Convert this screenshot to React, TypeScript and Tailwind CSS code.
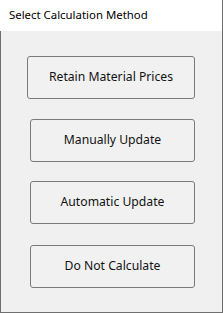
const buttons = [
  { label: "Retain Material Prices", w: "w-[168px]", mt: "mt-[25px]" },
  { label: "Manually Update", w: "w-[165px]", mt: "mt-[20px]" },
  { label: "Automatic Update", w: "w-[165px]", mt: "mt-[19px]" },
  { label: "Do Not Calculate", w: "w-[165px]", mt: "mt-[21px]" },
];

export default function App() {
  return (
    <div
      className="w-[223px] h-[313px] flex flex-col bg-white"
      style={{ fontFamily: '"Noto Sans", "Segoe UI", sans-serif' }}
    >
      {/* Title bar */}
      <div className="h-[31px] shrink-0 flex items-center pl-[9px] pb-[1px] bg-white border-r border-[#6f6f6f] text-[11.4px] text-black">
        Select Calculation Method
      </div>

      {/* Body */}
      <div className="flex-1 flex flex-col items-end pr-[27px] bg-[#f0f0f0] border-l border-r border-b border-[#6f6f6f]">
        {buttons.map((b) => (
          <button
            key={b.label}
            type="button"
            className={`${b.w} ${b.mt} h-[43px] shrink-0 rounded-[3px] border border-[#7a7a7a] bg-[#f1f1f1] text-[12.2px] text-[#111]`}
          >
            {b.label}
          </button>
        ))}
      </div>
    </div>
  );
}
